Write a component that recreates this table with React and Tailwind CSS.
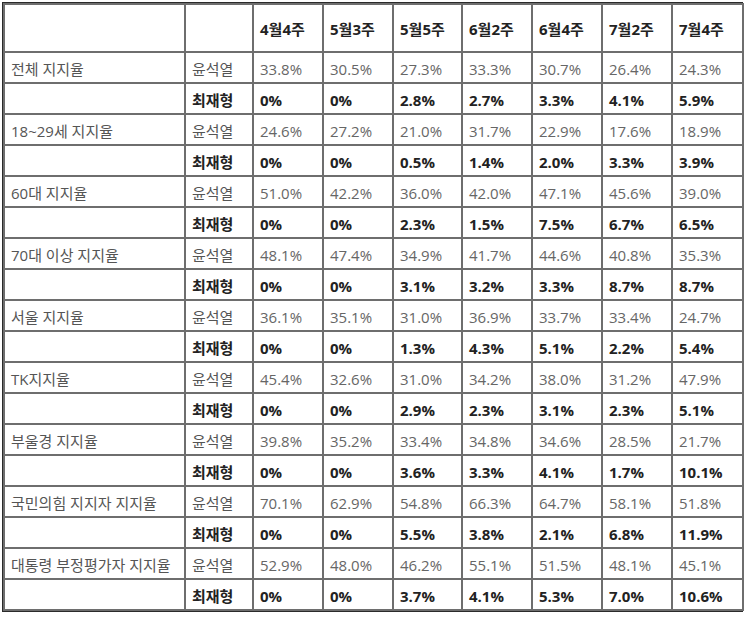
const weeks = ["4월4주", "5월3주", "5월5주", "6월2주", "6월4주", "7월2주", "7월4주"];

const groups = [
  { label: "전체 지지율", yoon: ["33.8%", "30.5%", "27.3%", "33.3%", "30.7%", "26.4%", "24.3%"], choi: ["0%", "0%", "2.8%", "2.7%", "3.3%", "4.1%", "5.9%"] },
  { label: "18~29세 지지율", yoon: ["24.6%", "27.2%", "21.0%", "31.7%", "22.9%", "17.6%", "18.9%"], choi: ["0%", "0%", "0.5%", "1.4%", "2.0%", "3.3%", "3.9%"] },
  { label: "60대 지지율", yoon: ["51.0%", "42.2%", "36.0%", "42.0%", "47.1%", "45.6%", "39.0%"], choi: ["0%", "0%", "2.3%", "1.5%", "7.5%", "6.7%", "6.5%"] },
  { label: "70대 이상 지지율", yoon: ["48.1%", "47.4%", "34.9%", "41.7%", "44.6%", "40.8%", "35.3%"], choi: ["0%", "0%", "3.1%", "3.2%", "3.3%", "8.7%", "8.7%"] },
  { label: "서울 지지율", yoon: ["36.1%", "35.1%", "31.0%", "36.9%", "33.7%", "33.4%", "24.7%"], choi: ["0%", "0%", "1.3%", "4.3%", "5.1%", "2.2%", "5.4%"] },
  { label: "TK지지율", yoon: ["45.4%", "32.6%", "31.0%", "34.2%", "38.0%", "31.2%", "47.9%"], choi: ["0%", "0%", "2.9%", "2.3%", "3.1%", "2.3%", "5.1%"] },
  { label: "부울경 지지율", yoon: ["39.8%", "35.2%", "33.4%", "34.8%", "34.6%", "28.5%", "21.7%"], choi: ["0%", "0%", "3.6%", "3.3%", "4.1%", "1.7%", "10.1%"] },
  { label: "국민의힘 지지자 지지율", yoon: ["70.1%", "62.9%", "54.8%", "66.3%", "64.7%", "58.1%", "51.8%"], choi: ["0%", "0%", "5.5%", "3.8%", "2.1%", "6.8%", "11.9%"] },
  { label: "대통령 부정평가자 지지율", yoon: ["52.9%", "48.0%", "46.2%", "55.1%", "51.5%", "48.1%", "45.1%"], choi: ["0%", "0%", "3.7%", "4.1%", "5.3%", "7.0%", "10.6%"] },
];

const cell = "border-2 border-[#6e6e6e] px-[6px] pt-[3px] pb-0 h-[31px] align-middle whitespace-nowrap";

export default function App() {
  return (
    <div className="bg-white w-[745px] h-[617px] pt-[2px] pl-[2px] font-['Open_Sans','Noto_Sans_CJK_KR',sans-serif] text-[15px] leading-none">
      <div className="w-[741px] border border-[#2a2a2a]">
        <table className="w-full border-collapse table-fixed">
          <colgroup>
            <col className="w-[181px]" />
            <col className="w-[68px]" />
            <col className="w-[70px]" />
            <col className="w-[70px]" />
            <col className="w-[69px]" />
            <col className="w-[70px]" />
            <col className="w-[70px]" />
            <col className="w-[70px]" />
            <col className="w-[71px]" />
          </colgroup>
          <thead>
            <tr>
              <th className={cell + " h-[48px]"}></th>
              <th className={cell + " h-[48px]"}></th>
              {weeks.map((w) => (
                <th key={w} className={cell + " h-[48px] text-left font-bold text-[#222]"}>{w}</th>
              ))}
            </tr>
          </thead>
          <tbody>
            {groups.map((g) => [
              <tr key={g.label + "a"}>
                <td className={cell + " text-[#555]"}>{g.label}</td>
                <td className={cell + " text-[#555]"}>윤석열</td>
                {g.yoon.map((v, i) => (
                  <td key={i} className={cell + " text-[#666]"}>{v}</td>
                ))}
              </tr>,
              <tr key={g.label + "b"}>
                <td className={cell}></td>
                <td className={cell + " font-bold text-[#222]"}>최재형</td>
                {g.choi.map((v, i) => (
                  <td key={i} className={cell + " font-bold text-[#222]"}>{v}</td>
                ))}
              </tr>,
            ])}
          </tbody>
        </table>
      </div>
    </div>
  );
}
